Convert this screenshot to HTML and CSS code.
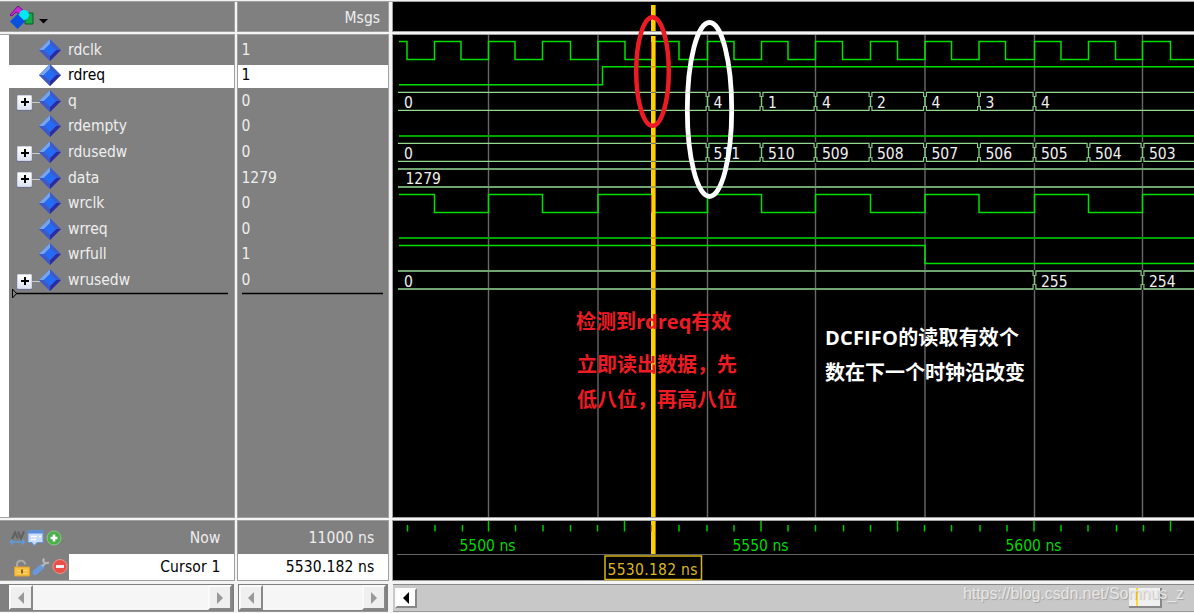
FILE: index.html
```html
<!DOCTYPE html>
<html lang="zh-CN">
<head>
    <meta charset="UTF-8">
    <title>Wave</title>
    <link rel="stylesheet" href="styles.css">
</head>
<body>
    <svg class="defs" width="0" height="0">
        <symbol id="signal" viewBox="0 0 22 22">
            <path d="M11 0l11 11-11 11L0 11z" fill="#3a5cc8"/>
            <path d="M11 0L0 11h5l6-6z" fill="#78a4ee"/>
            <path d="M0 11l11 11v-5l-6-6z" fill="#3e58c4"/>
            <path d="M22 11L11 22v-5l6-6z" fill="#2c2ca0"/>
            <path d="M11 5l6 6-6 6-6-6z" fill="#246cf8"/>
        </symbol>
    </svg>
    <div class="window">
        <div class="column">
            <div class="head">
                <svg width="40" height="28" viewBox="10 4 40 28">
                    <path d="M12 16l8-9 6 5-5 3-3-2-4 4z" fill="#c62ad8" stroke="#701080"/>
                    <path d="M27 14h8v11h-8z" fill="#18a848" stroke="#086020"/>
                    <circle cx="26" cy="16" r="5" fill="#00e8f8"/>
                    <path d="M19.500 15l7.500 7.500-7.500 7.500-7.500-7.500z" fill="#0850e0"/>
                    <path d="M41 20h9l-4.500 4.500z" fill="#000"/>
                </svg>
            </div>
            <div class="list names">
                <div class="row"><svg class="icon"><use href="#signal"/></svg>rdclk</div>
                <div class="row selected"><svg class="icon"><use href="#signal"/></svg>rdreq</div>
                <div class="row"><span class="expand"></span><svg class="icon"><use href="#signal"/></svg>q</div>
                <div class="row"><svg class="icon"><use href="#signal"/></svg>rdempty</div>
                <div class="row"><span class="expand"></span><svg class="icon"><use href="#signal"/></svg>rdusedw</div>
                <div class="row"><span class="expand"></span><svg class="icon"><use href="#signal"/></svg>data</div>
                <div class="row"><svg class="icon"><use href="#signal"/></svg>wrclk</div>
                <div class="row"><svg class="icon"><use href="#signal"/></svg>wrreq</div>
                <div class="row"><svg class="icon"><use href="#signal"/></svg>wrfull</div>
                <div class="row"><span class="expand"></span><svg class="icon"><use href="#signal"/></svg>wrusedw</div>
                <svg class="insert" width="220" height="12" viewBox="11 288 220 12">
                    <path d="M12.500 289v9l4-4.500z" fill="none" stroke="#000"/>
                    <path d="M16 293.500H228" stroke="#000" stroke-width="1.600"/>
                </svg>
            </div>
            <div class="foot">
                <div class="foot-row">
                    <svg width="60" height="32" viewBox="8 521.500 60 32">
                        <path d="M12 539l3-7 3 6M18 531l3 7 3-7" fill="none" stroke="#606060" stroke-width="2"/>
                        <path d="M11 541.500h13M13 539l-2.500 2.500 2.500 2.500M22 539l2.500 2.500-2.500 2.500" fill="none" stroke="#5c9ce0" stroke-width="1.300"/>
                        <path d="M28 530h15v12h-6l-3 3-2-3h-4z" fill="#c8dcf8" stroke="#6894d8"/>
                        <path d="M28 530h15v3H28z" fill="#5c8cd8"/>
                        <path d="M31 536h6M31 539h5M39 536h2" stroke="#fff" stroke-width="1.500"/>
                        <circle cx="54" cy="537.500" r="7" fill="#48b048" stroke="#8cc88c"/>
                        <path d="M50.500 537.500h7M54 534v7" stroke="#fff" stroke-width="2.600"/>
                    </svg>
                    <span>Now</span>
                </div>
                <div class="foot-row cursor-row">
                    <svg class="tools" width="61" height="26" viewBox="8 553.500 61 26">
                        <path d="M17 567v-3c0-5 8-5 8 0" fill="none" stroke="#aaa" stroke-width="2"/>
                        <path d="M14.500 566.500h15v9h-15z" fill="#f8c040" stroke="#e0a030"/>
                        <path d="M17 570h10M17 573h10" stroke="#fad878"/>
                        <path d="M22 569v4" stroke="#906010" stroke-width="2"/>
                        <path d="M35 572l7-6" stroke="#6898e0" stroke-width="5" stroke-linecap="round"/>
                        <path d="M42 566l3-3M44 558c-2 3 1 6 5 4" fill="none" stroke="#b8b8b8" stroke-width="2"/>
                        <circle cx="60" cy="566" r="7" fill="#e85048" stroke="#f09088"/>
                        <path d="M56 566h8" stroke="#fff" stroke-width="2.800"/>
                    </svg>
                    <span>Cursor 1</span>
                </div>
            </div>
            <div class="scroll">
                <span class="arrow left"></span><span class="track"></span><span class="arrow right"></span>
            </div>
        </div>
        <div class="column">
            <div class="head">Msgs</div>
            <div class="list values">
                <div class="row">1</div>
                <div class="row selected">1</div>
                <div class="row">0</div>
                <div class="row">0</div>
                <div class="row">0</div>
                <div class="row">1279</div>
                <div class="row">0</div>
                <div class="row">0</div>
                <div class="row">1</div>
                <div class="row">0</div>
                <svg class="insert" width="145" height="12" viewBox="238 288 145 12">
                    <path d="M242 293.500H383" stroke="#000" stroke-width="1.600"/>
                </svg>
            </div>
            <div class="foot">
                <div class="foot-row"><span>11000 ns</span></div>
                <div class="foot-row cursor-row"><span>5530.182 ns</span></div>
            </div>
            <div class="scroll">
                <span class="arrow left"></span><span class="track"></span><span class="arrow right"></span>
            </div>
        </div>
        <div class="column wave">
            <div class="head"></div>
            <svg class="signals" viewBox="393 35 801 482">
                <path class="grid" d="M488.500 35V517M598 35V517M707.500 35V517M815.500 35V517M925 35V517M1034.500 35V517M1142.500 35V517"/>
                <!-- rdclk, rdreq -->
                <path class="line" d="M399 41.500H407V59.500H434.500V41.500H461V59.500H488.500V41.500H515V59.500H542.500V41.500H570.500V59.500H598V41.500H625V59.500H652.500V41.500H679V59.500H707.500V41.500H734V59.500H761.500V41.500H788V59.500H815.500V41.500H842.500V59.500H870.500V41.500H897.500V59.500H925V41.500H951.500V59.500H979V41.500H1005.500V59.500H1034.500V41.500H1061V59.500H1088.500V41.500H1115.500V59.500H1142.500V41.500H1170.500V59.500H1194"/>
                <path class="line" d="M399 84.700H602.500V66.800H1194"/>
                <!-- q -->
                <path class="bus" d="M398 92.400H1194M398 110.400H1194"/>
                <!-- rdempty -->
                <path class="line flat" d="M399 136H1194"/>
                <!-- rdusedw -->
                <path class="bus" d="M398 143.400H1194M398 161.400H1194"/>
                <!-- value changes on q and rdusedw -->
                <path class="notch" d="M707.500 92v5M761.500 92v5M815.500 92v5M870.500 92v5M925 92v5M979 92v5M1034.500 92v5M707.500 106v5M761.500 106v5M815.500 106v5M870.500 106v5M925 106v5M979 106v5M1034.500 106v5M707.500 143v5M761.500 143v5M815.500 143v5M870.500 143v5M925 143v5M979 143v5M1034.500 143v5M1088.500 143v5M1142.500 143v5M707.500 157v5M761.500 157v5M815.500 157v5M870.500 157v5M925 157v5M979 157v5M1034.500 157v5M1088.500 157v5M1142.500 157v5"/>
                <path class="slit" d="M707.500 91v5.500M761.500 91v5.500M815.500 91v5.500M870.500 91v5.500M925 91v5.500M979 91v5.500M1034.500 91v5.500M707.500 106.500v5.500M761.500 106.500v5.500M815.500 106.500v5.500M870.500 106.500v5.500M925 106.500v5.500M979 106.500v5.500M1034.500 106.500v5.500M707.500 142v5.500M761.500 142v5.500M815.500 142v5.500M870.500 142v5.500M925 142v5.500M979 142v5.500M1034.500 142v5.500M1088.500 142v5.500M1142.500 142v5.500M707.500 157.500v5.500M761.500 157.500v5.500M815.500 157.500v5.500M870.500 157.500v5.500M925 157.500v5.500M979 157.500v5.500M1034.500 157.500v5.500M1088.500 157.500v5.500M1142.500 157.500v5.500"/>
                <path class="change" d="M761.500 96v11M815.500 96v11M870.500 96v11M925 96v11M979 96v11M1034.500 96v11M707.500 96v11M707.500 147v11M761.500 147v11M815.500 147v11M870.500 147v11M925 147v11M979 147v11M1034.500 147v11M1088.500 147v11M1142.500 147v11"/>
                <!-- data -->
                <path class="bus wide" d="M398 169H1194M398 187H1194"/>
                <!-- wrclk, wrreq, wrfull -->
                <path class="line" d="M399 194.500H434.500V212.500H488.500V194.500H542.500V212.500H598V194.500H652.500V212.500H707.500V194.500H761.500V212.500H815.500V194.500H870.500V212.500H925V194.500H979V212.500H1034.500V194.500H1088.500V212.500H1142.500V194.500H1194"/>
                <path class="line flat" d="M399 238H1194"/>
                <path class="line" d="M399 245.500H925V263.500H1194"/>
                <!-- wrusedw -->
                <path class="bus wide" d="M398 271H1194M398 289H1194"/>
                <path class="notch" d="M1034.500 271v5M1142.500 271v5M1034.500 284v5M1142.500 284v5"/>
                <path class="slit" d="M1034.500 270v5.500M1142.500 270v5.500M1034.500 284.500v5.500M1142.500 284.500v5.500"/>
                <path class="change" d="M1034.500 275v10M1142.500 275v10"/>
                <g class="label">
                    <text x="404" y="107.500">0</text>
                    <text x="713.500" y="107.500">4</text>
                    <text x="768" y="107.500">1</text>
                    <text x="822" y="107.500">4</text>
                    <text x="877" y="107.500">2</text>
                    <text x="931.500" y="107.500">4</text>
                    <text x="985.500" y="107.500">3</text>
                    <text x="1041" y="107.500">4</text>
                    <text x="404" y="158.500">0</text>
                    <text x="713.500" y="158.500">511</text>
                    <text x="768" y="158.500">510</text>
                    <text x="822" y="158.500">509</text>
                    <text x="877" y="158.500">508</text>
                    <text x="931.500" y="158.500">507</text>
                    <text x="985.500" y="158.500">506</text>
                    <text x="1041" y="158.500">505</text>
                    <text x="1095" y="158.500">504</text>
                    <text x="1149" y="158.500">503</text>
                    <text x="405.500" y="184">1279</text>
                    <text x="404" y="286.500">0</text>
                    <text x="1041" y="286.500">255</text>
                    <text x="1149" y="286.500">254</text>
                </g>
            </svg>
            <svg class="ruler" viewBox="393 521 801 59">
                <path class="ticks" d="M407.500 525v6.500M435 525v6.500M462.500 525v6.500M515.500 525v6.500M543 525v6.500M570.500 525v6.500M597.500 525v6.500M651.500 525v6.500M679 525v6.500M707 525v6.500M734 525v6.500M788 525v6.500M815.500 525v6.500M843.500 525v6.500M870.500 525v6.500M924.500 525v6.500M951.500 525v6.500M980 525v6.500M1007 525v6.500M1061 525v6.500M1088 525v6.500M1116.500 525v6.500M1143.500 525v6.500M488.500 521v10.500M624.500 521v10.500M761 521v10.500M897.500 521v10.500M1034 521v10.500M1170.500 521v10.500"/>
                <path d="M397 554.500H1194" stroke="#666"/>
                <text class="time" x="487.500" y="550.500">5500 ns</text>
                <text class="time" x="760.500" y="550.500">5550 ns</text>
                <text class="time" x="1033.500" y="550.500">5600 ns</text>
            </svg>
            <div class="scroll">
                <span class="arrow left active"></span><span class="track"></span><span class="thumb"></span>
            </div>
        </div>
        <svg class="overlay" viewBox="0 0 1194 613">
            <path d="M653.300 5V31M653.300 36V517M653.300 521V554" stroke="#fdd000" stroke-width="4.600"/>
            <path d="M651.500 42V59M651.500 195V212.500M651.500 525V531.500M651 66.800H656M651 136H656M651 238H656M651 245.500H656" stroke="#f86000" fill="none"/>
            <path d="M651 92.400H656M651 110.400H656M651 143.400H656M651 161.400H656M651 169H656M651 187H656M651 271H656M651 289H656" stroke="#786878"/>
            <rect x="605" y="556" width="96.500" height="23.500" fill="#000" stroke="#d8b418" stroke-width="1.500"/>
            <text class="cursor-time" x="607.500" y="574.500" textLength="90">5530.182 ns</text>
            <ellipse cx="652.500" cy="71.500" rx="16.300" ry="54.200" fill="none" stroke="#ed1c24" stroke-width="4.500"/>
            <ellipse cx="709.500" cy="109.500" rx="22.200" ry="87" fill="none" stroke="#fff" stroke-width="4.800"/>
            <g class="note red">
                <text x="576" y="328.500">检测到rdreq有效</text>
                <text x="577" y="371.500">立即读出数据，先</text>
                <text x="577" y="406.500">低八位，再高八位</text>
            </g>
            <g class="note">
                <text x="825" y="344.500" textLength="194">DCFIFO的读取有效个</text>
                <text x="825" y="379.500">数在下一个时钟沿改变</text>
            </g>
            <text class="watermark" x="963" y="599" textLength="221">https://blog.csdn.net/Somnus_z</text>
        </svg>
    </div>
</body>
</html>
```
FILE: styles.css
```css
body {
    margin: 0;
    background: #f0f0f0;
    font-family: "DejaVu Sans Condensed", "DejaVu Sans", sans-serif;
    font-stretch: condensed;
    font-size: 15.5px;
    color: #eee;
    overflow: hidden;
}

svg {
    display: block;
    flex-shrink: 0;
}

.defs {
    position: absolute;
}

.window {
    position: relative;
    display: grid;
    grid-template-columns: 234px 150px 801px;
    column-gap: 4px;
    box-sizing: border-box;
    width: 1194px;
    height: 613px;
    padding-top: 2px;
    background: linear-gradient(#f0f0f0 1px, #aaa 1px, #aaa 2px, #f4f4f4 2px);
}

.column {
    display: grid;
    grid-template-rows: 29px 482px 59px 29px;
    row-gap: 4px;
    min-width: 0;
}

.column:nth-child(3) {
    margin-left: 1px;
}

.head,
.list,
.foot,
.signals,
.ruler {
    box-shadow: 0 0 0 1px #a0a0a0;
}

.head {
    display: flex;
    align-items: center;
    justify-content: flex-end;
    box-sizing: border-box;
    padding: 3px 8px 0;
    background: #808080;
}

.column:first-child .head {
    justify-content: flex-start;
    padding-top: 0;
}

.list {
    box-sizing: border-box;
    padding-top: 2px;
    background: #808080;
}

.names {
    border-left: 9px solid #fff;
}

.row {
    display: flex;
    align-items: center;
    position: relative;
    height: 25.55px;
    padding-left: 59px;
}

.values .row {
    padding-left: 3.500px;
}

.selected {
    color: #000;
    background: linear-gradient(transparent 2px, #fff 2px);
}

.icon {
    width: 22px;
    height: 22px;
    margin-left: -29px;
    margin-right: 7px;
}

.expand {
    box-sizing: border-box;
    width: 15px;
    height: 15px;
    margin-left: -51px;
    margin-right: 36px;
    margin-top: 3px;
    border: 1px solid #d0d4e4;
    border-radius: 1px;
    background:
        linear-gradient(#000, #000) center / 8px 2px no-repeat,
        linear-gradient(#000, #000) center / 2px 8px no-repeat,
        linear-gradient(#fff, #dfe4f2);
    box-shadow: 0 1px 1px #6a6f90;
}

.expand::after {
    content: "";
    display: block;
    width: 8px;
    height: 1px;
    margin: 6px 0 0 14px;
    background: #ccc;
}

.insert {
    margin-top: -4px;
}

.names .insert {
    margin-left: 2px;
}

.foot {
    background: #808080;
}

.foot-row {
    display: flex;
    align-items: center;
    height: 33px;
    letter-spacing: 0.15px;
}

.foot-row span {
    flex: 1;
    padding-right: 13.500px;
    text-align: right;
}

.foot-row svg {
    margin-left: 8px;
}

.cursor-row {
    height: 26px;
    background: #fff;
    color: #000;
}

.cursor-row .tools {
    margin-left: 0;
    border-left: 8px solid #808080;
    background: #808080;
}

.scroll {
    display: flex;
    box-sizing: border-box;
    height: 28px;
    padding: 1px 2px 1px 1px;
    border-bottom: 1px solid #999;
    background: #808080;
}

.column:first-child .scroll {
    padding-left: 9px;
}

.track {
    flex: 1;
    background: #f6f6f6;
}

.arrow {
    display: flex;
    align-items: center;
    justify-content: center;
    box-sizing: border-box;
    width: 24px;
    border: 2px solid #fafafa;
    border-right-color: #888;
    border-bottom-color: #888;
    background: #efefef;
}

.arrow::before {
    content: "";
    border: 6px solid transparent;
}

.left::before {
    border-left-width: 0;
    border-right-color: #999;
}

.right::before {
    border-right-width: 0;
    border-left-color: #999;
}

.wave .head {
    background: #000;
}

.signals,
.ruler {
    width: 801px;
    height: 100%;
    background: #000;
    overflow: hidden;
}

.wave .scroll {
    padding: 3px 32px 3px 2px;
    border-top: 1px solid #888;
    background: #c8c8c8;
}

.wave .track {
    background: #c8c8c8;
}

.wave .active {
    width: 22px;
    background: #fff;
}

.active::before {
    border-right-color: #000;
}

.thumb {
    box-sizing: border-box;
    width: 33px;
    border-right: 2px solid #888;
    border-bottom: 2px solid #888;
    background: linear-gradient(#fdd835, #fdd835) 7px 0 / 2px 100% no-repeat #f0f0f0;
}

.grid {
    stroke: #686868;
    stroke-width: 1.400;
}

.line {
    fill: none;
    stroke: #00e000;
    stroke-width: 1.500;
}

.flat {
    stroke: #00a400;
    stroke-width: 2;
}

.bus {
    fill: none;
    stroke: #94d894;
    stroke-width: 1.400;
}

.wide {
    stroke: #70a470;
    stroke-width: 2;
}

.change {
    stroke: #80cc80;
    stroke-width: 1.400;
}

.notch {
    stroke: #8ccc8c;
    stroke-width: 4;
}

.slit {
    stroke: #000;
    stroke-width: 1.600;
}

.label {
    fill: #f0f0f0;
}

.ticks {
    stroke: #00c800;
    stroke-width: 1.500;
}

.time {
    fill: #00d800;
    text-anchor: middle;
}

.overlay {
    position: absolute;
    top: 0;
    left: 0;
    width: 1194px;
    height: 613px;
}

.cursor-time {
    fill: #dcb820;
}

.note {
    fill: #fff;
    font-family: "Open Sans", "Noto Sans CJK SC", sans-serif;
    font-stretch: normal;
    font-size: 20px;
    font-weight: bold;
}

.red {
    fill: #ed1c24;
}

.watermark {
    fill: #e6e6e6;
    font-family: "Liberation Sans", sans-serif;
    font-stretch: normal;
    font-size: 16px;
    text-shadow: 1px 1px 1px rgba(0, 0, 0, 0.2);
}
```
